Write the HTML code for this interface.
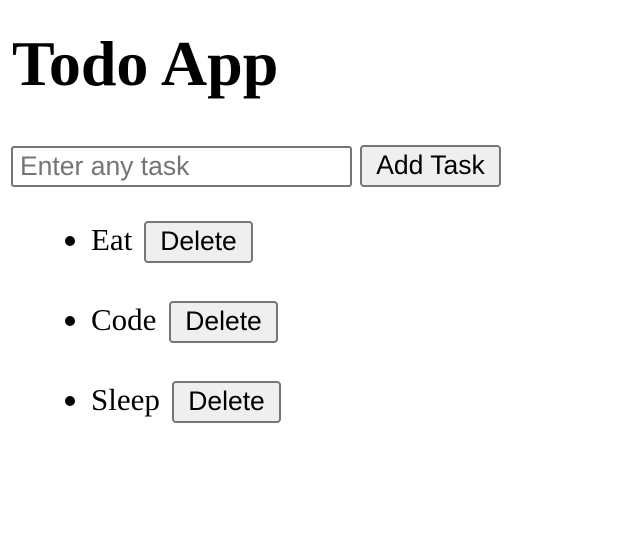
<!DOCTYPE html>
<html><head><style>
html,body{margin:0;padding:0;background:#fff;width:627px;height:541px;overflow:hidden;position:relative}
h1{position:absolute;left:12px;top:24px;margin:0;font:bold 64px/80px "Liberation Serif",serif;color:#000}
.in{position:absolute;left:11px;top:146px;height:37px;border:2px solid #767676;border-radius:3px;box-sizing:content-box;font:26.5px/36px "Liberation Sans",sans-serif;color:#757575;padding:0 0 0 7px;width:330px;background:#fff}
.btn{position:absolute;height:38px;border:2px solid #767676;border-radius:4px;background:#efefef;font:26.5px/36px "Liberation Sans",sans-serif;color:#000;text-align:center;box-sizing:content-box}
.li{position:absolute;left:91px;font:31px/42px "Liberation Serif",serif;color:#000}
.dot{position:absolute;left:65px;width:10px;height:10px;border-radius:50%;background:#000}
</style></head><body>
<h1>Todo App</h1>
<div class="in">Enter any task</div>
<div class="btn" style="left:360px;top:145px;width:137px">Add Task</div>

<div class="dot" style="top:236px"></div><div class="li" style="top:219px">Eat</div>
<div class="btn" style="left:144px;top:221px;width:105px">Delete</div>

<div class="dot" style="top:316px"></div><div class="li" style="top:299px">Code</div>
<div class="btn" style="left:169px;top:301px;width:105px">Delete</div>

<div class="dot" style="top:396px"></div><div class="li" style="top:379px">Sleep</div>
<div class="btn" style="left:172px;top:381px;width:105px">Delete</div>
</body></html>
